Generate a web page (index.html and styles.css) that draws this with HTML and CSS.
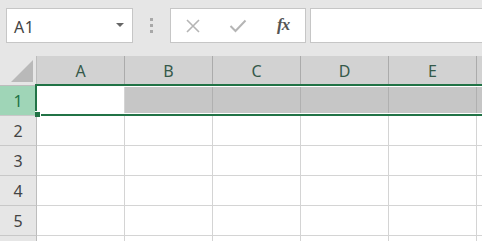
FILE: index.html
```html
<!DOCTYPE html>
<html>
<head>
<meta charset="utf-8">
<link rel="stylesheet" href="styles.css">
</head>
<body>
<div class="app">
  <div class="toolbar">
    <div class="namebox"><span class="ref">A1</span><span class="caret"></span></div>
    <div class="grip"><i></i><i></i><i></i></div>
    <div class="fbtns">
      <svg class="ico" width="16" height="16" viewBox="0 0 16 16"><path d="M2 2 L14 14 M14 2 L2 14" stroke="#b5b5b5" stroke-width="1.6" fill="none"/></svg>
      <svg class="ico" width="18" height="16" viewBox="0 0 18 16"><path d="M1.5 8 L6.5 13 L16.5 2.5" stroke="#b5b5b5" stroke-width="2" fill="none"/></svg>
      <span class="fx">fx</span>
    </div>
    <div class="finput"></div>
  </div>
  <div class="sheet">
    <div class="corner"><span class="tri"></span></div>
    <div class="ch">A</div><div class="ch">B</div><div class="ch">C</div><div class="ch">D</div><div class="ch">E</div><div class="ch"></div>

    <div class="rh sel">1</div>
    <div class="c active"></div><div class="c hl"></div><div class="c hl"></div><div class="c hl"></div><div class="c hl"></div><div class="c hl"></div>

    <div class="rh">2</div>
    <div class="c"></div><div class="c"></div><div class="c"></div><div class="c"></div><div class="c"></div><div class="c"></div>
    <div class="rh">3</div>
    <div class="c"></div><div class="c"></div><div class="c"></div><div class="c"></div><div class="c"></div><div class="c"></div>
    <div class="rh">4</div>
    <div class="c"></div><div class="c"></div><div class="c"></div><div class="c"></div><div class="c"></div><div class="c"></div>
    <div class="rh">5</div>
    <div class="c"></div><div class="c"></div><div class="c"></div><div class="c"></div><div class="c"></div><div class="c"></div>
    <div class="rh"></div>
    <div class="c"></div><div class="c"></div><div class="c"></div><div class="c"></div><div class="c"></div><div class="c"></div>

    <div class="selbox"></div>
    <div class="handle"></div>
  </div>
</div>
</body>
</html>
```

FILE: styles.css
```css
html, body {
  margin: 0;
  padding: 0;
  background: #ffffff;
}
.app {
  width: 482px;
  height: 241px;
  overflow: hidden;
  font-family: "Noto Sans", "Open Sans", "Noto Sans CJK JP", sans-serif;
}
.toolbar {
  height: 56px;
  background: #e6e6e6;
  display: flex;
  align-items: flex-start;
  padding-top: 8px;
  box-sizing: border-box;
}
.namebox {
  margin-left: 6px;
  width: 127px;
  height: 35px;
  box-sizing: border-box;
  background: #fff;
  border: 1px solid #c6c6c6;
  display: flex;
  align-items: center;
  justify-content: space-between;
  padding: 0 8px 0 7px;
}
.ref {
  font-size: 16px;
  color: #444;
  letter-spacing: 0.5px;
  margin-top: 2px;
}
.caret {
  width: 0;
  height: 0;
  border-left: 4px solid transparent;
  border-right: 4px solid transparent;
  border-top: 4px solid #666;
  margin-top: -2px;
}
.grip {
  width: 37px;
  height: 35px;
  display: flex;
  flex-direction: column;
  align-items: center;
  justify-content: center;
  gap: 3px;
}
.grip i {
  display: block;
  width: 3px;
  height: 3px;
  background: #a8a8a8;
}
.fbtns {
  width: 136px;
  height: 35px;
  box-sizing: border-box;
  background: #fff;
  border: 1px solid #c6c6c6;
  display: flex;
  align-items: center;
  padding-left: 14px;
  gap: 28px;
}
.fbtns .ico { display: block; }
.fx {
  font-family: "Liberation Serif", "DejaVu Serif", serif;
  font-style: italic;
  font-weight: bold;
  font-size: 17px;
  letter-spacing: -1px;
  color: #555;
  margin-left: 2px;
  margin-top: -1px;
}
.finput {
  margin-left: 4px;
  flex: 1;
  height: 35px;
  box-sizing: border-box;
  background: #fff;
  border: 1px solid #c6c6c6;
  border-right: none;
}
.sheet {
  position: relative;
  display: grid;
  grid-template-columns: 37px repeat(6, 88px);
  grid-template-rows: 30px repeat(6, 30px);
}
.corner {
  background: #e6e6e6;
  border-right: 1px solid #bdbdbd;
  border-bottom: 1px solid #bdbdbd;
  box-sizing: border-box;
  position: relative;
}
.tri {
  position: absolute;
  right: 3px;
  bottom: 3px;
  width: 0;
  height: 0;
  border-left: 22px solid transparent;
  border-bottom: 22px solid #b9b9b9;
}
.ch {
  background: #d2d2d2;
  border-right: 1px solid #ababab;
  border-bottom: 1px solid #ababab;
  box-sizing: border-box;
  display: flex;
  align-items: center;
  justify-content: center;
  font-size: 16px;
  color: #35594a;
  padding-top: 1px;
}
.rh {
  background: #e6e6e6;
  border-right: 1px solid #bdbdbd;
  border-bottom: 1px solid #c8c8c8;
  box-sizing: border-box;
  display: flex;
  align-items: center;
  justify-content: center;
  font-size: 16px;
  color: #444;
  padding-top: 1px;
}
.rh.sel {
  background: #9fd5b7;
  color: #217346;
}
.c {
  background: #fff;
  border-right: 1px solid #d4d4d4;
  border-bottom: 1px solid #d4d4d4;
  box-sizing: border-box;
}
.c.hl {
  background: #c6c6c6;
  border-right-color: #b0b0b0;
}
.selbox {
  position: absolute;
  left: 35px;
  top: 28px;
  width: 600px;
  height: 32px;
  border: 2px solid #217346;
  box-shadow: inset 0 0 0 1px #ffffff;
  box-sizing: border-box;
  pointer-events: none;
}
.handle {
  position: absolute;
  left: 35px;
  top: 55px;
  width: 5px;
  height: 5px;
  background: #217346;
  border: 1px solid #fff;
  border-left: none;
  border-bottom: none;
}
```
